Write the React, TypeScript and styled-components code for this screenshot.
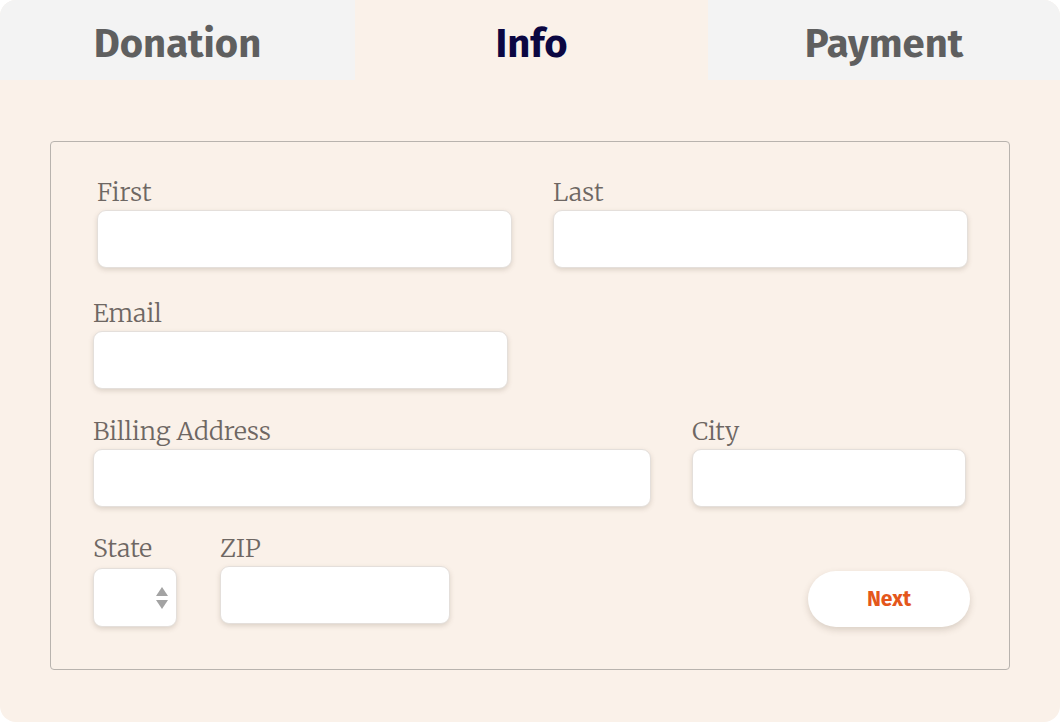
import React from "react"
import styled, {createGlobalStyle} from "styled-components"

const Color = {
  page: "#faf1e9",
  tab: "#f3f3f3",
  tabText: "#5f5f5f",
  tabActive: "#0b0742",
  label: "#6e6763",
  line: "#b8b3ae",
  orange: "#e4571b",
}

const GlobalStyle = createGlobalStyle`
  html, body {
    margin: 0;
    padding: 0;
    background: #ffffff;
  }
`

let Card = styled.div`
  width: 1060px;
  height: 722px;
  background: ${Color.page};
  border-radius: 16px;
  overflow: hidden;
  display: flex;
  flex-direction: column;
`

let Tabs = styled.div`
  display: grid;
  grid-template-columns: 355px 353px 352px;
  height: 80px;
`

let Tab = styled.div<{$active?: boolean}>`
  display: flex;
  align-items: center;
  justify-content: center;
  background: ${p => (p.$active ? Color.page : Color.tab)};
  color: ${p => (p.$active ? Color.tabActive : Color.tabText)};
  font-family: "Fira Sans", "Lato", "Open Sans", sans-serif;
  font-weight: 700;
  font-size: 40px;
  padding-top: 8px;
  box-sizing: border-box;
`

let Body = styled.div`
  padding: 61px 50px 0 50px;
`

let Fieldset = styled.div`
  width: 960px;
  height: 529px;
  box-sizing: border-box;
  border: 1px solid ${Color.line};
  border-radius: 4px;
  padding: 36px 0 0 42px;
  display: flex;
  flex-direction: column;
`

let Row = styled.div<{$top: number; $indent?: number}>`
  display: flex;
  align-items: flex-start;
  margin-top: ${p => p.$top}px;
  padding-left: ${p => p.$indent || 0}px;
`

let Field = styled.div<{$width: number; $gap?: number}>`
  display: flex;
  flex-direction: column;
  width: ${p => p.$width}px;
  margin-right: ${p => p.$gap || 0}px;
`

let Label = styled.label`
  font-family: "Merriweather", "DejaVu Serif", serif;
  font-weight: 300;
  font-size: 25px;
  line-height: 28px;
  color: ${Color.label};
  margin-bottom: 4px;
  white-space: nowrap;
`

let Input = styled.div<{$height?: number}>`
  height: ${p => p.$height || 58}px;
  box-sizing: border-box;
  background: #ffffff;
  border: 1px solid #e4dfdb;
  border-radius: 9px;
  box-shadow: 0 2px 5px rgba(90, 70, 50, 0.18);
  position: relative;
`

let Arrows = styled.svg`
  position: absolute;
  right: 8px;
  top: 17px;
`

let Spacer = styled.div`
  flex: 1;
`

let NextButton = styled.button`
  width: 162px;
  height: 56px;
  margin-top: 37px;
  margin-right: 39px;
  border: 0 none;
  border-radius: 28px;
  background: #ffffff;
  box-shadow: 0 3px 7px rgba(90, 70, 50, 0.2);
  color: ${Color.orange};
  font-family: "Fira Sans", "Lato", "Open Sans", sans-serif;
  font-weight: 700;
  font-size: 21px;
`

class App extends React.PureComponent {
  render() {
    return (
      <>
        <GlobalStyle/>
        <Card>
          <Tabs>
            <Tab>Donation</Tab>
            <Tab $active>Info</Tab>
            <Tab>Payment</Tab>
          </Tabs>
          <Body>
            <Fieldset>
              <Row $top={0} $indent={4}>
                <Field $width={415} $gap={41}>
                  <Label>First</Label>
                  <Input/>
                </Field>
                <Field $width={415}>
                  <Label>Last</Label>
                  <Input/>
                </Field>
              </Row>
              <Row $top={31}>
                <Field $width={415}>
                  <Label>Email</Label>
                  <Input/>
                </Field>
              </Row>
              <Row $top={28}>
                <Field $width={558} $gap={41}>
                  <Label>Billing Address</Label>
                  <Input/>
                </Field>
                <Field $width={274}>
                  <Label>City</Label>
                  <Input/>
                </Field>
              </Row>
              <Row $top={27}>
                <Field $width={84} $gap={43}>
                  <Label>State</Label>
                  <Input $height={59} style={{marginTop: 2}}>
                    <Arrows width="12" height="24" viewBox="0 0 12 24">
                      <path d="M6 1 L12 10 L0 10 Z" fill="#a3a3a3"/>
                      <path d="M0 14 L12 14 L6 23 Z" fill="#a3a3a3"/>
                    </Arrows>
                  </Input>
                </Field>
                <Field $width={230}>
                  <Label>ZIP</Label>
                  <Input/>
                </Field>
                <Spacer/>
                <NextButton>Next</NextButton>
              </Row>
            </Fieldset>
          </Body>
        </Card>
      </>
    )
  }
}

export default App
